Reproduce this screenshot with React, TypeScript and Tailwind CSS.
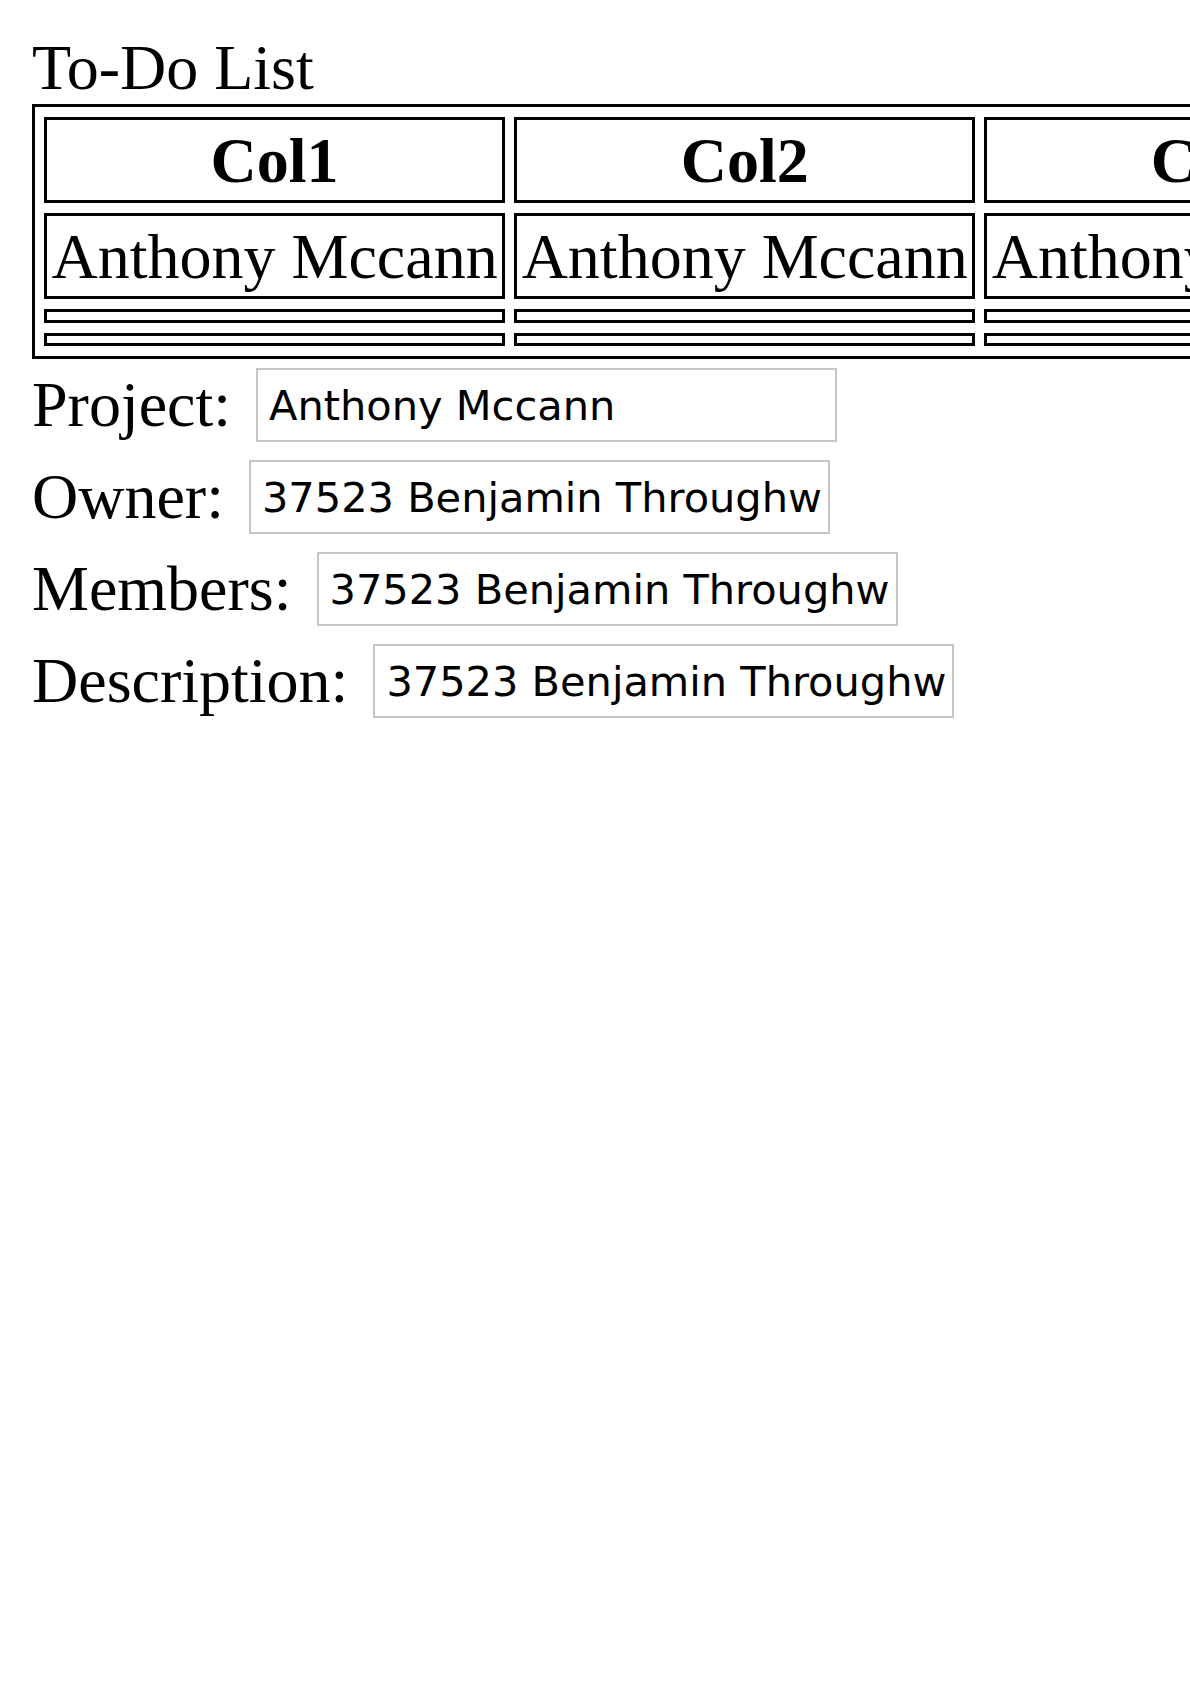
const columns = ['Col1', 'Col2', 'Col3', 'Col4', 'Col5'];

const fields = [
    { label: 'Project:', value: 'Anthony Mccann' },
    { label: 'Owner:', value: '37523 Benjamin Throughw' },
    { label: 'Members:', value: '37523 Benjamin Throughw' },
    { label: 'Description:', value: '37523 Benjamin Throughw' },
];

export default function App() {
    return (
        <div className="w-[1190px] overflow-hidden bg-white p-[32px] font-['Liberation_Serif','Times_New_Roman',serif] text-[64px] text-black">
            <div className="leading-[72px]">To-Do List</div>

            {/* task table, wider than the window */}
            <table className="border-separate border-spacing-x-[9px] border-spacing-y-[10px] border-[3px] border-black">
                <thead>
                    <tr>
                        {columns.map((c) => (
                            <th
                                key={c}
                                className="whitespace-nowrap border-[3px] border-black px-[4.5px] py-[3.5px] text-center font-bold leading-[73px]"
                            >
                                {c}
                            </th>
                        ))}
                    </tr>
                </thead>
                <tbody>
                    <tr>
                        {columns.map((c) => (
                            <td
                                key={c}
                                className="whitespace-nowrap border-[3px] border-black px-[4.5px] py-[3.5px] text-left leading-[73px]"
                            >
                                Anthony Mccann
                            </td>
                        ))}
                    </tr>
                    <tr>
                        {columns.map((c) => (
                            <td key={c} className="h-[13.5px] border-[3px] border-black p-0" />
                        ))}
                    </tr>
                    <tr>
                        {columns.map((c) => (
                            <td key={c} className="h-[13.5px] border-[3px] border-black p-0" />
                        ))}
                    </tr>
                </tbody>
            </table>

            {/* form fields */}
            <div className="mt-[9px] flex flex-col gap-[18px]">
                {fields.map((f) => (
                    <div key={f.label} className="flex items-center gap-[25px]">
                        <span className="whitespace-nowrap leading-[72px]">{f.label}</span>
                        <input
                            type="text"
                            defaultValue={f.value}
                            className="h-[74px] w-[581px] border-2 border-[#c6c6c6] bg-white pl-[11px] pr-[6px] font-['DejaVu_Sans',sans-serif] text-[41.5px] text-black outline-none"
                        />
                    </div>
                ))}
            </div>
        </div>
    );
}
